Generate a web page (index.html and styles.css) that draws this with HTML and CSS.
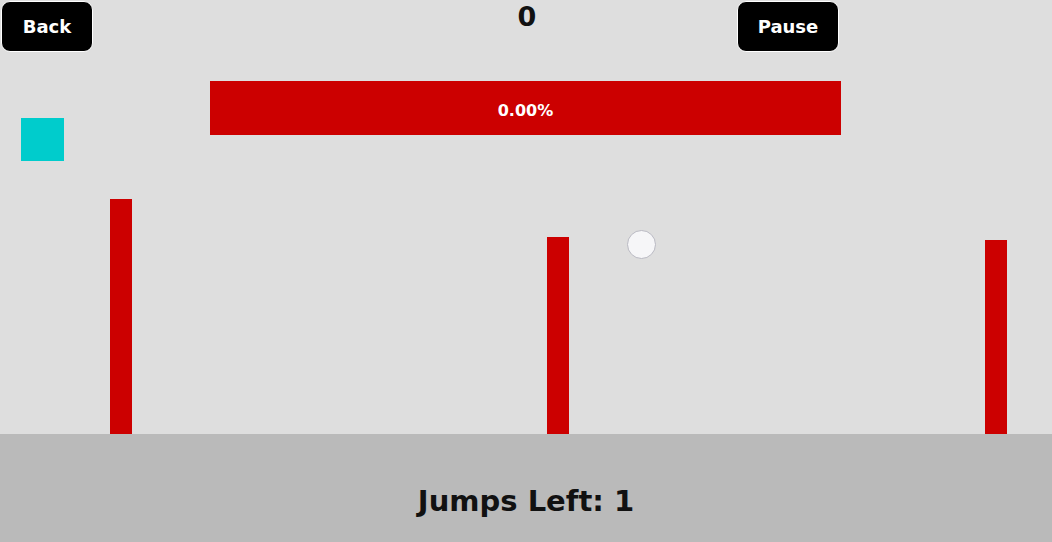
FILE: index.html
```html
<!DOCTYPE html>
<html lang="en">
<head>
    <meta charset="UTF-8">
    <meta name="viewport" content="width=device-width, initial-scale=1.0">
    <title>Jump Game</title>
    <link rel="stylesheet" href="styles.css">
</head>
<body>
    <div class="game">
        <!-- Top bar -->
        <div class="top-bar">
            <button class="btn btn-back">Back</button>
            <div class="score">0</div>
            <button class="btn btn-pause">Pause</button>
        </div>

        <!-- Progress -->
        <div class="progress">
            <span class="progress-text">0.00%</span>
        </div>

        <!-- Play field -->
        <div class="field">
            <div class="player"></div>
            <div class="pillar" style="left: 110px; height: 235px;"></div>
            <div class="pillar" style="left: 547px; height: 197px;"></div>
            <div class="pillar" style="left: 985px; height: 194px;"></div>
            <div class="ball"></div>
        </div>

        <!-- Ground -->
        <div class="ground">
            <span class="jumps">Jumps Left: 1</span>
        </div>
    </div>
</body>
</html>
```

FILE: styles.css
```css
body {
    margin: 0;
    font-family: "DejaVu Sans", "Open Sans", sans-serif;
    background-color: #dedede;
}
.game {
    width: 1052px;
    height: 542px;
    display: flex;
    flex-direction: column;
    overflow: hidden;
}
.top-bar {
    display: grid;
    grid-template-columns: 1fr auto 1fr;
    align-items: start;
    padding: 1px 0 0 1px;
    height: 51px;
    box-sizing: border-box;
}
.btn {
    background-color: #000;
    color: #fff;
    border: 1px solid #fff;
    border-radius: 9px;
    height: 51px;
    font-family: inherit;
    font-size: 18px;
    font-weight: bold;
    cursor: pointer;
}
.btn-back {
    width: 92px;
    justify-self: start;
}
.btn-pause {
    width: 102px;
    justify-self: end;
    margin-right: 213px;
}
.score {
    font-size: 27px;
    font-weight: bold;
    color: #111;
    line-height: 32px;
    margin-left: 1px;
}
.progress {
    margin: 30px 0 0 210px;
    width: 631px;
    height: 54px;
    background-color: #cc0000;
    display: flex;
    align-items: center;
    justify-content: center;
}
.progress-text {
    color: #fff;
    font-size: 16px;
    font-weight: bold;
    margin-top: 5px;
}
.field {
    flex: 1;
    position: relative;
}
.player {
    position: absolute;
    left: 21px;
    top: -17px;
    width: 43px;
    height: 43px;
    background-color: #00cccc;
}
.pillar {
    position: absolute;
    bottom: 0;
    width: 22px;
    background-color: #cc0000;
}
.ball {
    position: absolute;
    left: 627px;
    top: 95px;
    width: 27px;
    height: 27px;
    border-radius: 50%;
    background-color: #f6f6f8;
    border: 1px solid #b9b9c2;
}
.ground {
    height: 108px;
    background-color: #bababa;
    display: flex;
    justify-content: center;
    align-items: flex-end;
    padding-bottom: 24px;
    box-sizing: border-box;
}
.jumps {
    font-size: 29px;
    font-weight: bold;
    color: #111;
}
```
